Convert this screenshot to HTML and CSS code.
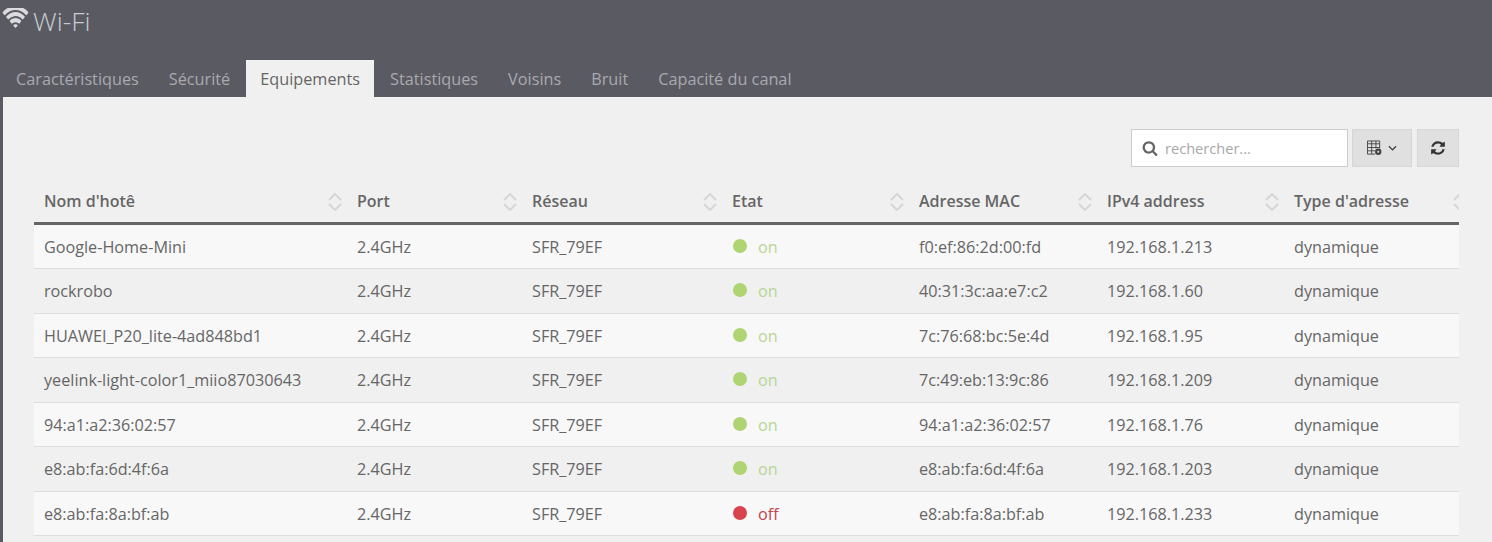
FILE: index.html
```html
<!DOCTYPE html>
<html lang="fr">
<head>
<meta charset="utf-8">
<title>Wi-Fi</title>
<link rel="stylesheet" href="styles.css">
</head>
<body>
<header class="head">
  <h1 class="title">
    <svg class="wifi" viewBox="0 256 2048 1267" preserveAspectRatio="none"><path d="M1024 1523q-20 0-93-73.500t-73-93.500q0-32 62.500-54t103.500-22 103.500 22 62.500 54q0 20-73 93.500t-93 73.500zm270-271q-2 0-40-25t-101.500-50-128.500-25-128.500 25-101 50-40.500 25q-18 0-93.500-75t-75.500-93q0-13 10-23 78-77 196-121t233-44 233 44 196 121q10 10 10 23 0 18-75.500 93t-93.500 75zm273-272q-11 0-23-8-136-105-252-154.500t-268-49.500q-85 0-170.500 22t-149 53-113.500 62-79 53-31 22q-17 0-92-75t-75-93q0-12 10-22 132-132 320-205t380-73 380 73 320 205q10 10 10 22 0 18-75 93t-92 75zm271-271q-11 0-22-9-179-157-371.500-236.500t-420.500-79.500-420.500 79.500-371.500 236.500q-11 9-22 9-17 0-92.500-75t-75.500-93q0-13 10-23 187-186 445-288t527-102 527 102 445 288q10 10 10 23 0 18-75.500 93t-92.500 75z"/></svg>
    <span>Wi-Fi</span>
  </h1>
  <nav class="tabs">
    <a class="tab">Caractéristiques</a>
    <a class="tab">Sécurité</a>
    <a class="tab active">Equipements</a>
    <a class="tab">Statistiques</a>
    <a class="tab">Voisins</a>
    <a class="tab">Bruit</a>
    <a class="tab">Capacité du canal</a>
  </nav>
</header>
<main class="panel">
  <div class="toolbar">
    <label class="search">
      <svg class="search-icon" viewBox="0 0 1792 1792"><path d="M1216 832q0-185-131.500-316.500t-316.500-131.500-316.500 131.500-131.500 316.500 131.500 316.500 316.500 131.500 316.500-131.500 131.500-316.500zm512 832q0 52-38 90t-90 38q-54 0-90-38l-343-342q-179 124-399 124-143 0-273.500-55.500t-225-150-150-225-55.500-273.500 55.500-273.500 150-225 225-150 273.500-55.500 273.500 55.500 225 150 150 225 55.500 273.500q0 220-124 399l343 343q37 37 37 90z"/></svg>
      <span class="placeholder">rechercher...</span>
    </label>
    <button class="btn btn-cols" type="button">
      <svg class="cols-icon" viewBox="0 0 16 16"><path class="grid-line" d="M.5.500h13v8M.5.500v14h8M.5 3.500h13M.5 7.500h13M.5 11h8M5 .500v14M9.500.500v8"/><circle class="gear" cx="12" cy="12" r="3.400"/><circle class="gear-hole" cx="12" cy="12" r="1.100"/></svg>
      <svg class="chev" viewBox="0 0 10 6"><path d="M1 1l4 4 4-4"/></svg>
    </button>
    <button class="btn btn-refresh" type="button">
      <svg class="refresh" viewBox="0 0 1792 1792"><path d="M1639 1056q0 5-1 7-64 268-268 434.500t-478 166.500q-146 0-282.500-55t-243.500-157l-129 129q-19 19-45 19t-45-19-19-45v-448q0-26 19-45t45-19h448q26 0 45 19t19 45-19 45l-137 137q71 66 161 102t187 36q134 0 250-65t186-179q11-17 53-117 8-23 30-23h192q13 0 22.500 9.500t9.500 22.500zm25-800v448q0 26-19 45t-45 19h-448q-26 0-45-19t-19-45 19-45l138-138q-148-137-349-137-134 0-250 65t-186 179q-11 17-53 117-8 23-30 23h-199q-13 0-22.500-9.500t-9.500-22.500v-7q65-268 270-434.500t480-166.500q146 0 284 55.500t245 156.500l130-129q19-19 45-19t45 19 19 45z"/></svg>
    </button>
  </div>
  <div class="table-wrap">
    <table class="devices">
      <colgroup>
        <col class="c1"><col class="c2"><col class="c3"><col class="c4"><col class="c5"><col class="c6"><col class="c7">
      </colgroup>
      <thead>
        <tr>
          <th><div class="th-in">Nom d'hotê<svg class="sort" viewBox="0 0 14 18"><path d="M1 7l6-6 6 6M1 11l6 6 6-6"/></svg></div></th>
          <th><div class="th-in">Port<svg class="sort" viewBox="0 0 14 18"><path d="M1 7l6-6 6 6M1 11l6 6 6-6"/></svg></div></th>
          <th><div class="th-in">Réseau<svg class="sort" viewBox="0 0 14 18"><path d="M1 7l6-6 6 6M1 11l6 6 6-6"/></svg></div></th>
          <th><div class="th-in">Etat<svg class="sort" viewBox="0 0 14 18"><path d="M1 7l6-6 6 6M1 11l6 6 6-6"/></svg></div></th>
          <th><div class="th-in">Adresse MAC<svg class="sort" viewBox="0 0 14 18"><path d="M1 7l6-6 6 6M1 11l6 6 6-6"/></svg></div></th>
          <th><div class="th-in">IPv4 address<svg class="sort" viewBox="0 0 14 18"><path d="M1 7l6-6 6 6M1 11l6 6 6-6"/></svg></div></th>
          <th><div class="th-in">Type d'adresse<svg class="sort" viewBox="0 0 14 18"><path d="M1 7l6-6 6 6M1 11l6 6 6-6"/></svg></div></th>
        </tr>
      </thead>
      <tbody>
        <tr><td>Google-Home-Mini</td><td>2.4GHz</td><td>SFR_79EF</td><td><span class="state on"><i class="dot"></i>on</span></td><td>f0:ef:86:2d:00:fd</td><td>192.168.1.213</td><td>dynamique</td></tr>
        <tr><td>rockrobo</td><td>2.4GHz</td><td>SFR_79EF</td><td><span class="state on"><i class="dot"></i>on</span></td><td>40:31:3c:aa:e7:c2</td><td>192.168.1.60</td><td>dynamique</td></tr>
        <tr><td>HUAWEI_P20_lite-4ad848bd1</td><td>2.4GHz</td><td>SFR_79EF</td><td><span class="state on"><i class="dot"></i>on</span></td><td>7c:76:68:bc:5e:4d</td><td>192.168.1.95</td><td>dynamique</td></tr>
        <tr><td>yeelink-light-color1_miio87030643</td><td>2.4GHz</td><td>SFR_79EF</td><td><span class="state on"><i class="dot"></i>on</span></td><td>7c:49:eb:13:9c:86</td><td>192.168.1.209</td><td>dynamique</td></tr>
        <tr><td>94:a1:a2:36:02:57</td><td>2.4GHz</td><td>SFR_79EF</td><td><span class="state on"><i class="dot"></i>on</span></td><td>94:a1:a2:36:02:57</td><td>192.168.1.76</td><td>dynamique</td></tr>
        <tr><td>e8:ab:fa:6d:4f:6a</td><td>2.4GHz</td><td>SFR_79EF</td><td><span class="state on"><i class="dot"></i>on</span></td><td>e8:ab:fa:6d:4f:6a</td><td>192.168.1.203</td><td>dynamique</td></tr>
        <tr><td>e8:ab:fa:8a:bf:ab</td><td>2.4GHz</td><td>SFR_79EF</td><td><span class="state off"><i class="dot"></i>off</span></td><td>e8:ab:fa:8a:bf:ab</td><td>192.168.1.233</td><td>dynamique</td></tr>
      </tbody>
    </table>
  </div>
</main>
</body>
</html>
```
FILE: styles.css
```css
* { box-sizing: border-box; }
html, body { margin: 0; height: 542px; overflow: hidden; }
body {
  background: #5a5a63;
  font-family: "Open Sans", sans-serif;
  font-size: 16.250px;
  color: #666;
}
.head { height: 97px; display: flex; flex-direction: column; }
.title {
  height: 60px;
  margin: 0;
  display: flex;
  align-items: flex-start;
  gap: 4px;
  padding: 6px 0 0 2px;
  font-size: 26.500px;
  font-weight: 300;
  line-height: 30px;
  color: #c8ccd0;
}
.wifi { width: 27px; height: 20px; fill: #dcdce0; margin-top: 2px; }
.tabs { display: flex; gap: 2px; padding-left: 2px; height: 37px; }
.tab {
  padding: 0 14px;
  line-height: 38px;
  color: #a9a9ae;
}
.tab.active { background: #f0f0f0; color: #666; }
.panel {
  height: 445px;
  margin-left: 3px;
  background: #f0f0f0;
  padding: 32px 33px 0 31px;
  overflow: hidden;
}
.toolbar { display: flex; justify-content: flex-end; height: 38px; }
.search {
  width: 217px;
  height: 38px;
  display: flex;
  align-items: center;
  gap: 7px;
  padding-left: 10px;
  background: #fff;
  border: 1px solid #ccc;
  margin-right: 4px;
}
.search-icon { width: 16px; height: 16px; fill: #666; }
.placeholder { font-size: 14.600px; color: #a8a8a8; }
.btn {
  height: 38px;
  padding: 0;
  display: flex;
  align-items: center;
  justify-content: center;
  background: #e0e0e0;
  border: 1px solid #d6d6d6;
}
.btn-cols { width: 60px; gap: 6px; margin-right: 5px; }
.btn-refresh { width: 42px; }
.cols-icon { width: 15px; height: 16px; }
.grid-line { fill: none; stroke: #444; stroke-width: 1; }
.gear { fill: #444; }
.gear-hole { fill: #e0e0e0; }
.chev { width: 9px; height: 6px; fill: none; stroke: #444; stroke-width: 1.400; }
.refresh { width: 16px; height: 16px; fill: #333; }
.table-wrap { width: 1425px; margin-top: 13px; overflow: hidden; }
.devices {
  table-layout: fixed;
  border-collapse: separate;
  border-spacing: 0;
  width: 1438px;
}
.c1 { width: 313px; }
.c2 { width: 175px; }
.c3 { width: 200px; }
.c4 { width: 187px; }
.c5 { width: 188px; }
.c6 { width: 187px; }
.c7 { width: 188px; }
th {
  height: 44.500px;
  padding: 0 5px 0 10px;
  text-align: left;
  font-size: 16px;
  font-weight: 600;
  color: #666;
  border-bottom: 3px solid #666;
}
.th-in { display: flex; align-items: center; justify-content: space-between; height: 41.500px; }
.sort { width: 14px; height: 18px; fill: none; stroke: #d6d6d6; stroke-width: 2; margin-top: 2px; }
tbody tr { height: 44.500px; }
td {
  padding: 1px 10px 0;
  border-bottom: 1px solid #ddd;
  font-size: 16.200px;
  white-space: nowrap;
}
tbody tr:nth-child(odd) td { background: #f8f8f8; }
.state { display: flex; align-items: center; gap: 11px; }
.dot { width: 14px; height: 14px; border-radius: 50%; margin: -2px 0 0 1px; }
.on { color: #b8d596; }
.on .dot { background: #afd473; }
.off { color: #c5444f; }
.off .dot { background: #d9434e; }
```
